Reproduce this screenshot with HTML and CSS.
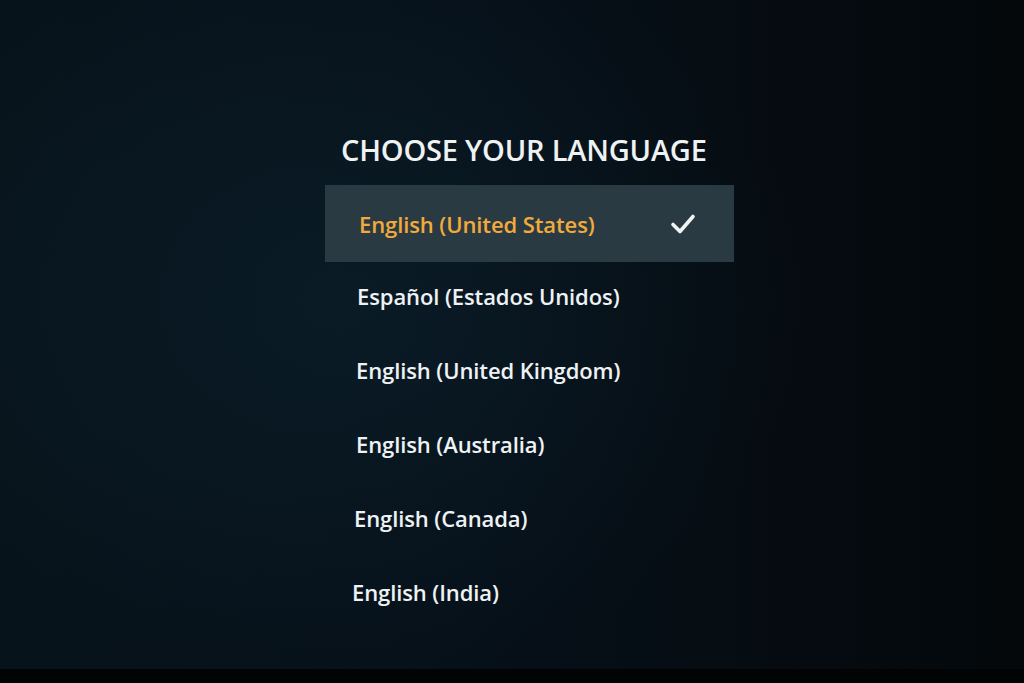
FILE: index.html
```html
<!DOCTYPE html>
<html lang="en">
<head>
<meta charset="utf-8">
<title>Choose your language</title>
<link rel="stylesheet" href="styles.css">
</head>
<body>
<div class="screen">
  <main class="panel">
    <h1 class="title">CHOOSE YOUR LANGUAGE</h1>
    <ul class="list">
      <li class="item selected"><span>English (United States)</span>
        <svg class="check" width="26" height="22" viewBox="0 0 26 22"><path d="M3 11.5 L10 18.5 L23 3.5" fill="none" stroke="#f2f4f4" stroke-width="3.6" stroke-linecap="round" stroke-linejoin="round"/></svg>
      </li>
      <li class="item"><span>Español (Estados Unidos)</span></li>
      <li class="item"><span>English (United Kingdom)</span></li>
      <li class="item"><span>English (Australia)</span></li>
      <li class="item"><span>English (Canada)</span></li>
      <li class="item"><span>English (India)</span></li>
    </ul>
  </main>
  <div class="bezel"></div>
</div>
</body>
</html>
```
FILE: styles.css
```css
html, body {
  margin: 0;
  padding: 0;
  height: 100%;
  overflow: hidden;
}
body {
  background: #000;
  font-family: "Open Sans", "Noto Sans", sans-serif;
}
.screen {
  height: 683px;
  display: flex;
  flex-direction: column;
  background:
    radial-gradient(ellipse 620px 520px at 340px 300px, rgba(14, 36, 48, 0.55), rgba(0,0,0,0) 75%),
    linear-gradient(90deg, #07131b 0%, #061019 45%, #050b10 80%, #04080b 100%);
}
.panel {
  flex: 1;
  padding: 130px 0 0 325px;
}
.title {
  margin: 0 0 15px 16px;
  font-size: 29px;
  font-weight: 600;
  color: #eef2f3;
  letter-spacing: -0.2px;
  line-height: 40px;
}
.list {
  list-style: none;
  margin: 0;
  padding: 0;
  width: 409px;
}
.item {
  height: 74px;
  box-sizing: border-box;
  display: flex;
  align-items: center;
  justify-content: space-between;
  padding: 0 38px 6px 31px;
  font-size: 22px;
  font-weight: 600;
  letter-spacing: -0.1px;
  color: #eef2f4;
}
.item.selected {
  height: 77px;
  padding: 0 38px 0 34px;
  background: #2a3a42;
  color: #f2aa3c;
}
.item:nth-child(2) { padding-left: 32px; }
.item:nth-child(5) { padding-left: 29px; }
.item:nth-child(6) { padding-left: 27px; }
.check {
  display: block;
}
.bezel {
  height: 14px;
  background: #020304;
}
```
